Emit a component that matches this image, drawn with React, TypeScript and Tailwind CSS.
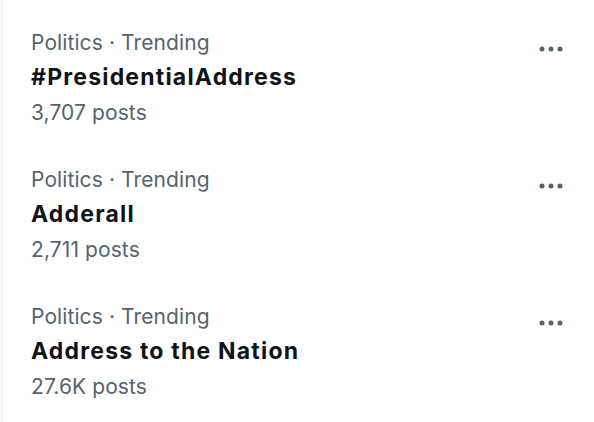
import React from "react";

const trends = [
  { meta: "Politics · Trending", title: "#PresidentialAddress", posts: "3,707 posts" },
  { meta: "Politics · Trending", title: "Adderall", posts: "2,711 posts" },
  { meta: "Politics · Trending", title: "Address to the Nation", posts: "27.6K posts" },
];

const MoreIcon = () => (
  <svg width="26" height="8" viewBox="0 0 26 8" className="fill-[#536471]">
    <circle cx="4" cy="4" r="2.5" />
    <circle cx="13" cy="4" r="2.5" />
    <circle cx="22" cy="4" r="2.5" />
  </svg>
);

export default function App() {
  return (
    <div
      className="w-[594px] h-[422px] bg-white overflow-hidden"
      style={{ fontFamily: "Inter, 'Noto Sans', sans-serif" }}
    >
      <div className="ml-[1px] h-full border-l-2 border-[#f3f5f6] pt-[9px]">
        {trends.map((t) => (
          <div key={t.title} className="flex justify-between pl-[28px] pr-[30px] py-4">
            <div className="flex flex-col">
              <span className="text-[21px] leading-[35px] text-[#536471] tracking-[0.1px]">{t.meta}</span>
              <span className="text-[23px] leading-[35px] font-bold text-[#0f1419] tracking-[1.2px]">
                {t.title}
              </span>
              <span className="text-[21px] leading-[35px] text-[#536471] tracking-[0.1px]">{t.posts}</span>
            </div>
            <div className="pt-[20px]">
              <MoreIcon />
            </div>
          </div>
        ))}
      </div>
    </div>
  );
}
